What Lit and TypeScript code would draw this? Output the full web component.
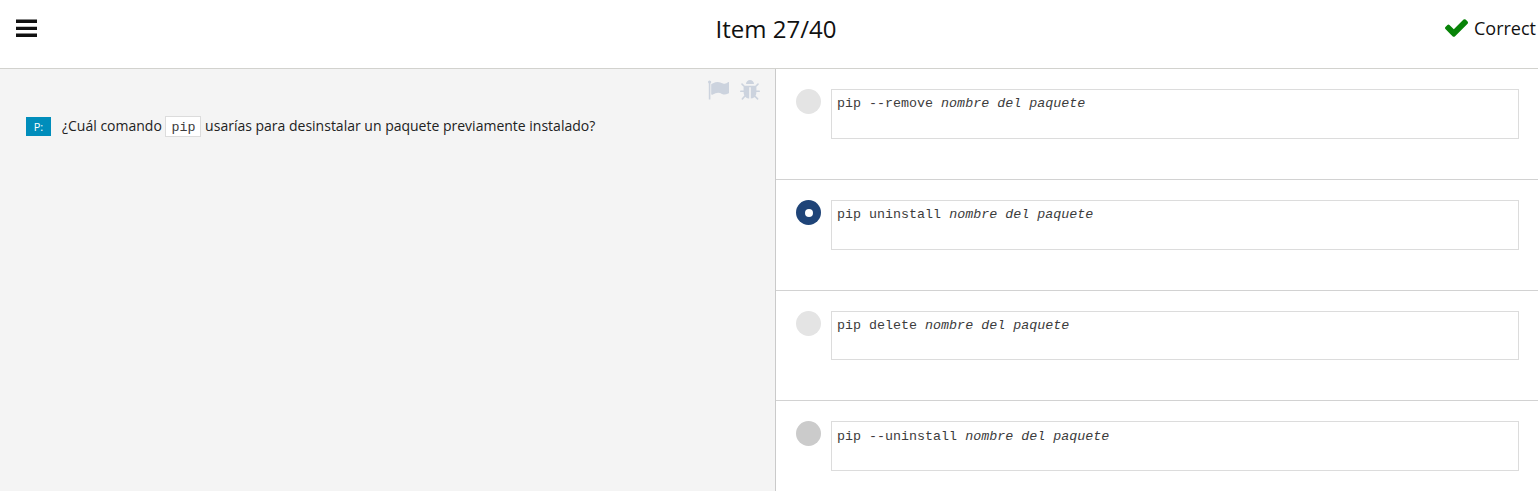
import { LitElement, html, css } from "lit";
import { customElement, property } from "lit/decorators.js";
import { classMap } from "lit/directives/class-map.js";

@customElement("answer-option")
class AnswerOption extends LitElement {
  @property() command = "";
  @property() state = "";

  static styles = css`
    :host {
      display: flex;
      box-sizing: border-box;
      height: 111px;
      padding: 20px 19px 0 20px;
      border-bottom: 1px solid #d2d2d2;
    }
    :host(:nth-of-type(3)) {
      height: 110px;
    }
    :host(:nth-of-type(3)) .code {
      height: 49px;
    }
    :host(:nth-of-type(4)) .code {
      padding-top: 6px;
    }
    .radio {
      flex: none;
      display: grid;
      place-items: center;
      width: 25px;
      height: 25px;
      margin-right: 10px;
      border-radius: 50%;
      background: #e4e4e4;
    }
    .radio.hover {
      background: #cbcbcb;
    }
    .radio.selected {
      background: #1f4478;
    }
    .dot {
      width: 8px;
      height: 8px;
      border-radius: 50%;
      background: #fff;
    }
    .code {
      flex: 1;
      box-sizing: border-box;
      height: 50px;
      margin: 0;
      padding: 5px;
      border: 1px solid #dcdcdc;
      font: 13.35px/18px "Liberation Mono", monospace;
      color: #3c3c3c;
    }
  `;

  render() {
    const selected = this.state === "selected";
    return html`
      <span class=${classMap({ radio: true, selected, hover: this.state === "hover" })}>
        ${selected ? html`<span class="dot"></span>` : ""}
      </span>
      <pre class="code">${this.command} <em>nombre del paquete</em></pre>
    `;
  }
}

@customElement("app-root")
class AppRoot extends LitElement {
  static styles = css`
    :host {
      display: flex;
      flex-direction: column;
      height: 491px;
      overflow: hidden;
      background: #fff;
      font-family: "Open Sans", sans-serif;
      color: #111;
    }
    svg {
      display: block;
    }
    .header {
      flex: none;
      display: grid;
      grid-template-columns: 1fr auto 1fr;
      box-sizing: border-box;
      height: 69px;
      padding: 0 2px 0 16px;
      border-bottom: 1px solid #d2d2ce;
    }
    .menu {
      margin-top: 19px;
    }
    .title {
      margin: 12px 0 0;
      font-size: 24px;
      line-height: 34px;
      font-weight: 400;
    }
    .result {
      display: flex;
      justify-content: flex-end;
      margin-top: 16px;
      font-size: 18px;
      line-height: 25px;
    }
    .check {
      margin: 3px 6px 0 0;
    }
    .main {
      flex: 1;
      min-height: 0;
      display: flex;
    }
    .question {
      box-sizing: border-box;
      width: 776px;
      padding: 11px 15px 0 26px;
      background: #f4f4f4;
      border-right: 1px solid #cacaca;
    }
    .tools {
      display: flex;
      justify-content: flex-end;
      gap: 11px;
      height: 36px;
      color: #ccd3de;
    }
    .prompt {
      display: flex;
      align-items: flex-start;
    }
    .badge {
      width: 25px;
      height: 19px;
      margin: 1px 11px 0 0;
      background: #008dbb;
      color: #fff;
      font-size: 11px;
      line-height: 20px;
      text-align: center;
    }
    .text {
      margin: 0;
      font-size: 14px;
      line-height: 20px;
      color: #222;
      white-space: nowrap;
    }
    .inline-code {
      padding: 3px 5px 1px;
      border: 1px solid #dcdcdc;
      background: #fff;
      font: 13.33px "Liberation Mono", monospace;
      color: #3c3c3c;
    }
    .answers {
      flex: 1;
      min-width: 0;
    }
  `;

  render() {
    return html`
      <header class="header">
        <svg class="menu" width="21" height="19" viewBox="0 0 21 19">
          <path fill="#111" d="M0 .6h21v3.4H0zM0 7.700h21V11H0zM0 14.500h21v3.500H0z" />
        </svg>
        <h1 class="title">Item 27/40</h1>
        <div class="result">
          <svg class="check" width="23" height="18" viewBox="121 334 1550 1188">
            <path
              fill="#078307"
              d="M1671 566q0 40-28 68l-724 724-136 136q-28 28-68 28t-68-28l-136-136-362-362q-28-28-28-68t28-68l136-136q28-28 68-28t68 28l294 295 656-657q28-28 68-28t68 28l136 136q28 28 28 68z"
            />
          </svg>
          <span>Correct</span>
        </div>
      </header>
      <div class="main">
        <section class="question">
          <div class="tools">
            <svg width="21.500" height="20" viewBox="64 128 1728 1536" fill="currentColor">
              <path
                d="M320 256q0 72-64 110v1266q0 13-9.5 22.5t-22.5 9.5h-64q-13 0-22.5-9.5t-9.5-22.5v-1266q-64-38-64-110 0-53 37.5-90.5t90.5-37.5 90.5 37.5 37.5 90.5zm1472 64v763q0 25-12.5 38.5t-39.5 27.500q-215 116-369 116-61 0-123.5-22t-108.5-48-115.5-48-142.5-22q-192 0-464 146-17 9-33 9-26 0-45-19t-19-45v-742q0-32 31-55 21-14 79-43 236-120 421-120 107 0 200 29t219 88q38 19 88 19 54 0 117.5-21t110-47 88-47 54.500-21q26 0 45 19t19 45z"
              />
            </svg>
            <svg width="20" height="19.500" viewBox="32 64 1600 1550" fill="currentColor">
              <path
                d="M1632 960q0 26-19 45t-45 19h-224q0 171-67 290l208 209q19 19 19 45t-19 45q-18 19-45 19t-45-19l-198-197q-5 5-15 13t-42 28.5-65 36.5-82 29-97 13v-896h-128v896q-51 0-101.5-13.5t-87-33-66-39-43.5-32.5l-15-14-183 207q-20 21-48 21-24 0-43-16-19-18-20.5-44.5t15.5-46.5l202-227q-58-114-58-274h-224q-26 0-45-19t-19-45 19-45 45-19h224v-294l-173-173q-19-19-19-45t19-45 45-19 45 19l173 173h844l173-173q19-19 45-19t45 19 19 45-19 45l-173 173v294h224q26 0 45 19t19 45zm-480-576h-640q0-133 93.5-226.5t226.5-93.5 226.5 93.5 93.5 226.500z"
              />
            </svg>
          </div>
          <div class="prompt">
            <span class="badge">P:</span>
            <p class="text">¿Cuál comando <code class="inline-code">pip</code> usarías para desinstalar un paquete previamente instalado?</p>
          </div>
        </section>
        <section class="answers">
          <answer-option command="pip --remove"></answer-option>
          <answer-option command="pip uninstall" state="selected"></answer-option>
          <answer-option command="pip delete"></answer-option>
          <answer-option command="pip --uninstall" state="hover"></answer-option>
        </section>
      </div>
    `;
  }
}
